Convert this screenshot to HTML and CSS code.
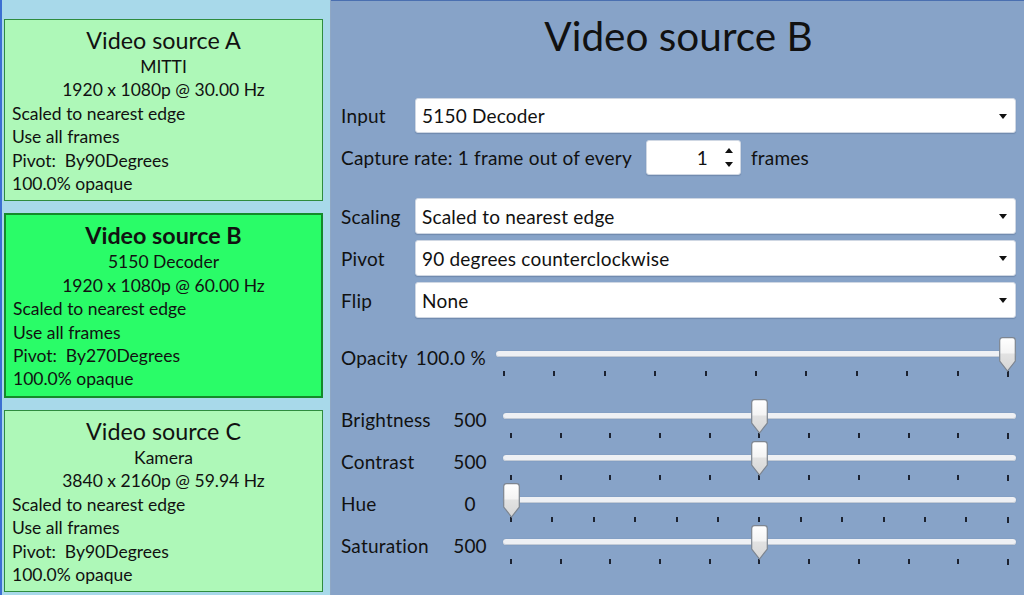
FILE: index.html
```html
<!DOCTYPE html>
<html lang="en">
<head>
	<meta charset="UTF-8">
	<title>Video sources</title>
	<link rel="stylesheet" href="styles.css">
</head>
<body>
	<div class="app">
		<!-- list of sources on the left -->
		<div class="sources">
			<div class="card">
				<div class="card-title">Video source A</div>
				<div class="center">MITTI</div>
				<div class="center">1920 x 1080p @ 30.00 Hz</div>
				<div>Scaled to nearest edge</div>
				<div>Use all frames</div>
				<div>Pivot:&nbsp; By90Degrees</div>
				<div>100.0% opaque</div>
			</div>
			<div class="card active">
				<div class="card-title">Video source B</div>
				<div class="center">5150 Decoder</div>
				<div class="center">1920 x 1080p @ 60.00 Hz</div>
				<div>Scaled to nearest edge</div>
				<div>Use all frames</div>
				<div>Pivot:&nbsp; By270Degrees</div>
				<div>100.0% opaque</div>
			</div>
			<div class="card">
				<div class="card-title">Video source C</div>
				<div class="center">Kamera</div>
				<div class="center">3840 x 2160p @ 59.94 Hz</div>
				<div>Scaled to nearest edge</div>
				<div>Use all frames</div>
				<div>Pivot:&nbsp; By90Degrees</div>
				<div>100.0% opaque</div>
			</div>
		</div>

		<!-- settings of the selected source -->
		<div class="editor">
			<h1>Video source B</h1>

			<div class="row input-row">
				<span class="label">Input</span>
				<div class="select">5150 Decoder<span class="arrow"></span></div>
			</div>

			<div class="row rate-row">
				<span>Capture rate: 1 frame out of every</span>
				<div class="spin">
					<span class="spin-value">1</span>
					<span class="spin-btns"><span class="up"></span><span class="down"></span></span>
				</div>
				<span class="frames">frames</span>
			</div>

			<div class="row scale-row">
				<span class="label">Scaling</span>
				<div class="select">Scaled to nearest edge<span class="arrow"></span></div>
			</div>
			<div class="row pick-row">
				<span class="label">Pivot</span>
				<div class="select">90 degrees counterclockwise<span class="arrow"></span></div>
			</div>
			<div class="row pick-row">
				<span class="label">Flip</span>
				<div class="select">None<span class="arrow"></span></div>
			</div>

			<div class="slider-row opacity">
				<div class="s-head"><span>Opacity</span><span class="s-pct">100.0 %</span></div>
				<div class="slider" style="--pos:1">
					<div class="track"></div>
					<div class="ticks"><i></i><i></i><i></i><i></i><i></i><i></i><i></i><i></i><i></i><i></i><i class="last"></i></div>
					<svg class="thumb" width="17" height="35" viewBox="0 0 17 35"><use href="#thumb"/></svg>
				</div>
			</div>

			<div class="slider-row first">
				<div class="s-head"><span class="s-label">Brightness</span><span class="s-value">500</span></div>
				<div class="slider" style="--pos:0.5">
					<div class="track"></div>
					<div class="ticks"><i></i><i></i><i></i><i></i><i></i><i></i><i></i><i></i><i></i><i></i><i class="last"></i></div>
					<svg class="thumb" width="17" height="35" viewBox="0 0 17 35"><use href="#thumb"/></svg>
				</div>
			</div>
			<div class="slider-row">
				<div class="s-head"><span class="s-label">Contrast</span><span class="s-value">500</span></div>
				<div class="slider" style="--pos:0.5">
					<div class="track"></div>
					<div class="ticks"><i></i><i></i><i></i><i></i><i></i><i></i><i></i><i></i><i></i><i></i><i class="last"></i></div>
					<svg class="thumb" width="17" height="35" viewBox="0 0 17 35"><use href="#thumb"/></svg>
				</div>
			</div>
			<div class="slider-row">
				<div class="s-head"><span class="s-label">Hue</span><span class="s-value">0</span></div>
				<div class="slider" style="--pos:0">
					<div class="track"></div>
					<div class="ticks"><i></i><i></i><i></i><i></i><i></i><i></i><i></i><i></i><i></i><i></i><i></i><i></i><i class="last"></i></div>
					<svg class="thumb" width="17" height="35" viewBox="0 0 17 35"><use href="#thumb"/></svg>
				</div>
			</div>
			<div class="slider-row">
				<div class="s-head"><span class="s-label">Saturation</span><span class="s-value">500</span></div>
				<div class="slider" style="--pos:0.5">
					<div class="track"></div>
					<div class="ticks"><i></i><i></i><i></i><i></i><i></i><i></i><i></i><i></i><i></i><i></i><i class="last"></i></div>
					<svg class="thumb" width="17" height="35" viewBox="0 0 17 35"><use href="#thumb"/></svg>
				</div>
			</div>
		</div>
	</div>

	<!-- slider thumb shape -->
	<svg width="0" height="0" class="defs">
		<defs>
			<linearGradient id="thumbFill" x1="0" y1="0" x2="0" y2="1">
				<stop offset="0" stop-color="#ffffff"/>
				<stop offset="0.45" stop-color="#f4f4f4"/>
				<stop offset="0.5" stop-color="#e2e2e2"/>
				<stop offset="1" stop-color="#d6d6d6"/>
			</linearGradient>
			<path id="thumb" d="M3.5 0.7 H13.5 Q16.3 0.7 16.3 3.5 V24 L8.5 34 L0.7 24 V3.5 Q0.7 0.7 3.5 0.7 Z" fill="url(#thumbFill)" stroke="#7d8590" stroke-width="1.2"/>
		</defs>
	</svg>
</body>
</html>
```

FILE: styles.css
```css
*{
	margin: 0;
	padding: 0;
	box-sizing: border-box;
}
body{
	width: 1024px;
	height: 595px;
	overflow: hidden;
	font-family: Lato, "Noto Sans", sans-serif;
	color: #111;
}
.app{
	display: flex;
	height: 595px;
}
.defs{
	position: absolute;
}

/* left list */
.sources{
	width: 331px;
	background: #a8d9ea;
	border-left: 2px solid #3c6fd2;
	border-right: 1px solid #8fa7c4;
	padding: 19px 0 0 2px;
	display: flex;
	flex-direction: column;
	gap: 12px;
}
.card{
	width: 319px;
	background: #aef8b8;
	border: 1px solid #2f8c3e;
	padding: 6px 7px 5px;
	font-size: 17.5px;
	line-height: 23.4px;
}
.card.active{
	background: #2afc68;
	border: 2px solid #148a2a;
}
.card-title{
	text-align: center;
	font-size: 23.3px;
	line-height: 28px;
	margin-bottom: 1px;
}
.active .card-title{
	font-weight: bold;
}
.center{
	text-align: center;
}

/* right editor */
.editor{
	flex: 1;
	background: #87a3c8;
	border-top: 1px solid #4a6fb0;
	padding: 0 8px 0 10px;
	font-size: 19px;
	letter-spacing: 0.2px;
}
h1{
	font-weight: normal;
	font-size: 40.5px;
	letter-spacing: 0;
	line-height: 52px;
	padding-top: 9px;
	text-align: center;
}
.row{
	display: flex;
	align-items: center;
}
.label{
	width: 74px;
}
.select{
	flex: 1;
	position: relative;
	background: #fff;
	border: 1px solid #cfd7e3;
	border-radius: 3px;
	box-shadow: 0 1px 1px rgba(40,60,90,.25);
	padding-left: 6px;
	display: flex;
	align-items: center;
}
.arrow{
	position: absolute;
	right: 8px;
	top: 50%;
	margin-top: -2px;
	border-left: 4.5px solid transparent;
	border-right: 4.5px solid transparent;
	border-top: 5px solid #111;
}
.input-row{
	margin-top: 36px;
}
.input-row .select{
	height: 35px;
}
.rate-row{
	margin-top: 7px;
	height: 35px;
}
.spin{
	margin-left: 14px;
	width: 95px;
	height: 35px;
	background: #fff;
	border: 1px solid #cfd7e3;
	border-radius: 3px;
	box-shadow: 0 1px 1px rgba(40,60,90,.25);
	display: flex;
	align-items: center;
	justify-content: flex-end;
	padding-right: 6px;
}
.spin-value{
	margin-right: 16px;
}
.spin-btns{
	display: flex;
	flex-direction: column;
	gap: 9px;
	width: 10px;
	align-items: center;
}
.up{
	border-left: 4px solid transparent;
	border-right: 4px solid transparent;
	border-bottom: 5px solid #111;
}
.down{
	border-left: 4px solid transparent;
	border-right: 4px solid transparent;
	border-top: 5px solid #111;
}
.frames{
	margin-left: 10px;
}
.scale-row{
	margin-top: 23px;
}
.scale-row .select, .pick-row .select{
	height: 36px;
}
.pick-row{
	margin-top: 6px;
}

/* sliders */
.slider-row{
	display: flex;
	height: 42px;
}
.slider-row.opacity{
	margin-top: 19px;
}
.slider-row.first{
	margin-top: 20px;
}
.s-head{
	width: 162px;
	display: flex;
	line-height: 42px;
}
.opacity .s-head{
	width: 155px;
}
.s-pct{
	margin-left: 8px;
}
.s-label{
	width: 99px;
}
.s-value{
	width: 60px;
	text-align: center;
}
.slider{
	flex: 1;
	position: relative;
}
.track{
	margin-top: 14px;
	height: 6px;
	border-radius: 3px;
	background: #eef0f4;
	box-shadow: inset 0 -1px 0 #c3cbd6, 0 0 1px rgba(60,80,110,.4);
}
.ticks{
	display: flex;
	justify-content: space-between;
	padding: 0 7px;
	margin-top: 14px;
}
.ticks i{
	display: block;
	width: 2px;
	height: 5px;
	background: #1c2230;
}
.ticks i.last{
	height: 6px;
}
.thumb{
	position: absolute;
	top: 0;
	left: calc((100% - 17px) * var(--pos));
}
```
